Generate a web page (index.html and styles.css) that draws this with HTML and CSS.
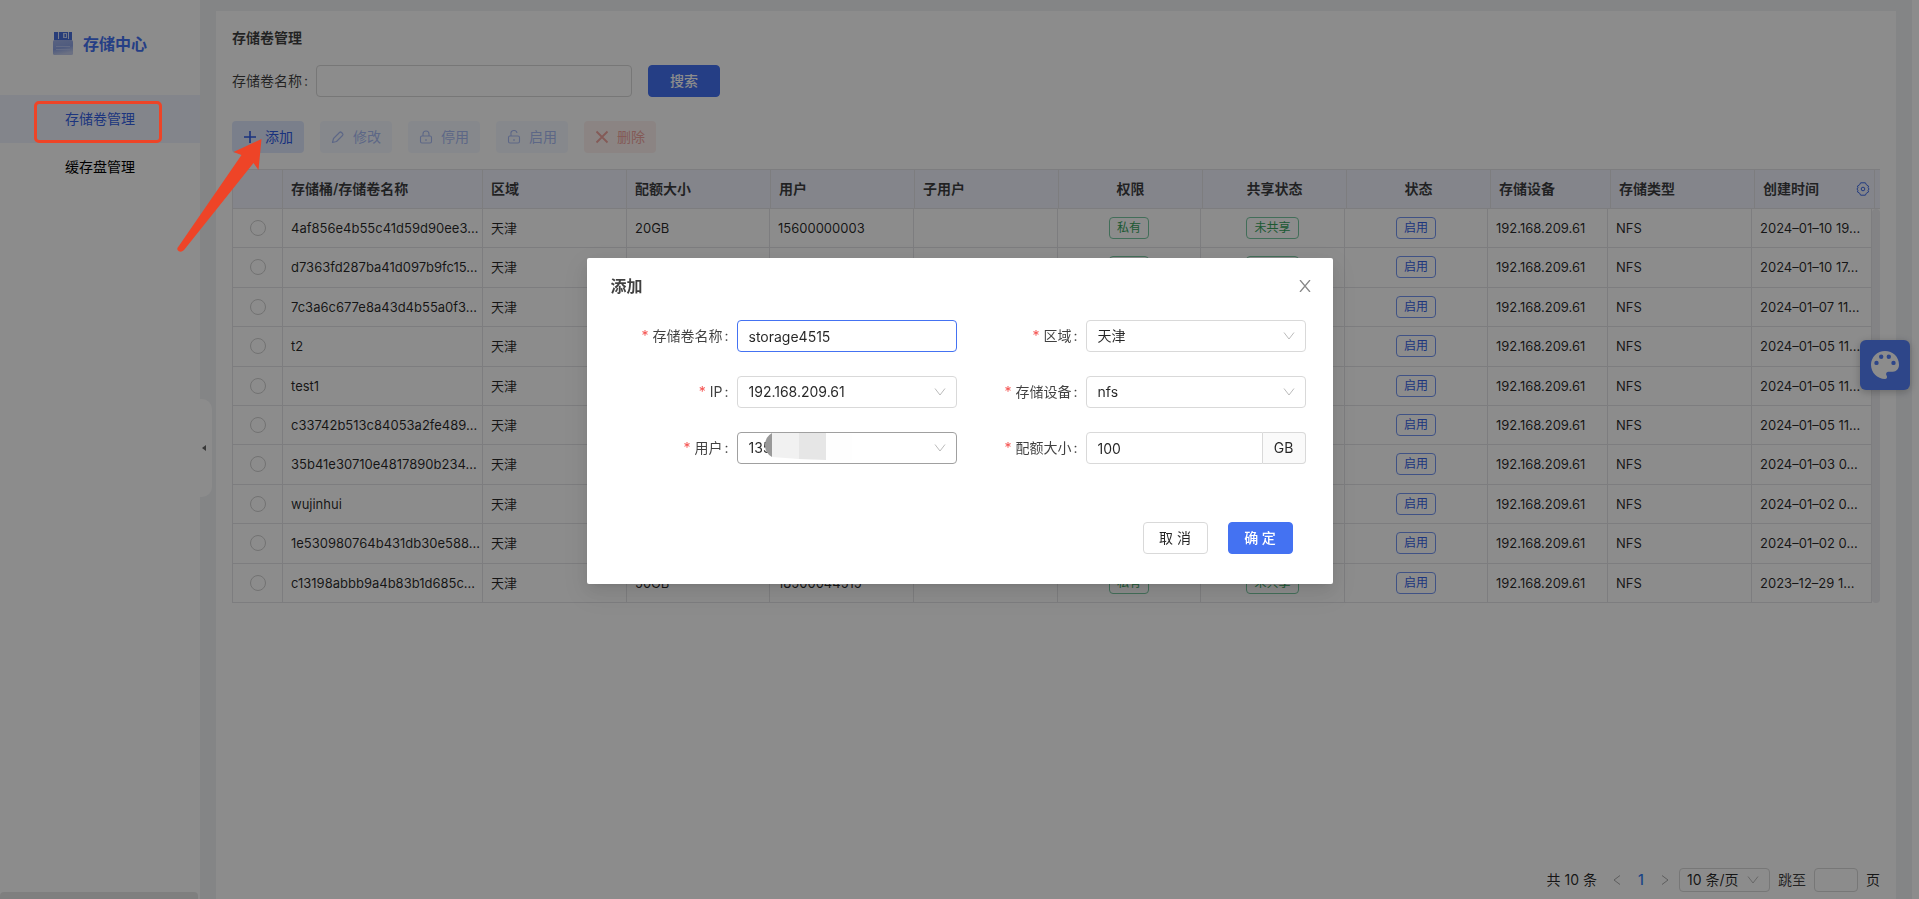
FILE: index.html
```html
<!DOCTYPE html>
<html lang="zh-CN">
<head>
<meta charset="utf-8">
<title>存储中心</title>
<link rel="stylesheet" href="styles.css">
</head>
<body>
<div class="app">
  <aside class="sidebar">
    <div class="brand">
      <svg class="brand-icon" width="20" height="24" viewBox="0 0 20 24" aria-hidden="true">
        <defs><linearGradient id="disk" x1="0" y1="0" x2="0.300" y2="1"><stop offset="0" stop-color="#a3b4ea"/><stop offset="0.600" stop-color="#8fa5e6"/><stop offset="1" stop-color="#c3cdee"/></linearGradient></defs>
        <path d="M1 1h18v8H1z" fill="#4a6fdc"/>
        <path d="M5 1h1v7H5zM15 1h1v7h-1z" fill="#dfe6fb"/>
        <path d="M10 2h4v5h-4z" fill="#c9d5f8"/><path d="M11.500 3h1.500v3h-1.500z" fill="#4a6fdc"/>
        <rect y="9" width="20" height="15" rx="1.500" fill="url(#disk)"/>
        <path d="M3 15.500h14M3 18.500h14" stroke="#b4c3f2"/>
      </svg>
      <span>存储中心</span>
    </div>
    <nav class="menu">
      <a class="menu-item active" href="#volumes">存储卷管理</a>
      <a class="menu-item" href="#cache">缓存盘管理</a>
    </nav>
    <div class="side-scroll"></div>
    <button class="collapse" aria-label="收起"><svg width="4" height="6" viewBox="0 0 4 6"><path d="M4 0v6L0 3z" fill="#666"/></svg></button>
  </aside>
  <main class="card">
    <h1 class="title">存储卷管理</h1>
    <form class="search">
      <label for="q">存储卷名称<span class="colon">:</span></label>
      <input id="q" class="box search-input" type="text">
      <button class="btn primary search-btn" type="button">搜索</button>
    </form>
    <div class="toolbar">
      <button class="tool"><svg width="14" height="14" viewBox="0 0 14 14"><path d="M7 1v12M1 7h12" stroke="currentColor" stroke-width="1.600"/></svg>添加</button>
      <button class="tool" disabled><svg width="14" height="14" viewBox="0 0 14 14" fill="none" stroke="currentColor" stroke-width="1.200" stroke-linejoin="round"><path d="M1.500 12.500 2.500 8.500 8.500 2.500Q9.500 1.500 10.500 2.500L11.500 3.500Q12.500 4.500 11.500 5.500L5.500 11.500Z"/></svg>修改</button>
      <button class="tool" disabled><svg width="14" height="14" viewBox="0 0 14 14" fill="none" stroke="currentColor" stroke-width="1.100"><rect x="1.500" y="6" width="11" height="7" rx="1.500"/><path d="M4 6V4a3 3 0 0 1 6 0v2M7 9v2"/></svg>停用</button>
      <button class="tool" disabled><svg width="14" height="14" viewBox="0 0 14 14" fill="none" stroke="currentColor" stroke-width="1.100"><rect x="1.500" y="6" width="11" height="7" rx="1.500"/><path d="M4 6V4a3 3 0 0 1 6-1M7 9v2"/></svg>启用</button>
      <button class="tool danger" disabled><svg width="14" height="14" viewBox="0 0 14 14"><path d="M1.500 1.500l11 11M12.500 1.500l-11 11" stroke="currentColor" stroke-width="1.800"/></svg>删除</button>
    </div>
    <div class="table-wrap">
      <table class="grid head">
        <colgroup><col style="width:51px"><col style="width:200px"><col style="width:144px"><col style="width:144px"><col style="width:144px"><col style="width:144px"><col style="width:144px"><col style="width:144px"><col style="width:144px"><col style="width:120px"><col style="width:144px"><col style="width:120px"><col style="width:5px"></colgroup>
        <thead><tr><th></th><th>存储桶/存储卷名称</th><th>区域</th><th>配额大小</th><th>用户</th><th>子用户</th><th class="c">权限</th><th class="c">共享状态</th><th class="c">状态</th><th>存储设备</th><th>存储类型</th><th class="last"><div class="th-flex">创建时间<svg width="14" height="14" viewBox="0 0 14 14" fill="none" stroke="#3f6be8"><path d="M4.600.8h4.800l1 2 2.100 1.200-.4 1.600.9 1.400-.9 1.400.4 1.600-2.100 1.200-1 2H4.600l-1-2L1.500 10l.4-1.600L1 7l.9-1.400L1.500 4l2.100-1.200z"/><circle cx="7" cy="7" r="1.800"/></svg></div></th><th></th></tr></thead>
      </table>
      <div class="body-row">
        <table class="grid body">
          <colgroup><col style="width:51px"><col style="width:200px"><col style="width:144px"><col style="width:143px"><col style="width:144px"><col style="width:144px"><col style="width:143px"><col style="width:144px"><col style="width:143px"><col style="width:120px"><col style="width:144px"><col style="width:120px"></colgroup>
          <tbody id="rows"></tbody>
        </table>
        <div class="track"></div>
      </div>
    </div>
    <div class="pager">
      <span>共 10 条</span>
      <span class="pages">
        <button class="pg" aria-label="上一页"><svg width="8" height="10" viewBox="0 0 8 10" fill="none" stroke="#aaa"><path d="M7 .5 1 5l6 4.500"/></svg></button>
        <button class="pg current">1</button>
        <button class="pg" aria-label="下一页"><svg width="8" height="10" viewBox="0 0 8 10" fill="none" stroke="#aaa"><path d="M1 .5 7 5 1 9.500"/></svg></button>
      </span>
      <span class="pick pick-page"><select class="box" aria-label="每页条数"><option>10 条/页</option></select><svg class="chev" width="12" height="8" viewBox="0 0 12 8" fill="none" stroke="#bbb"><path d="M1 .5 6 7l5-6.500"/></svg></span>
      <label for="jump">跳至</label><input id="jump" class="box jump" type="text"><span>页</span>
    </div>
  </main>
  <button class="palette" aria-label="主题"><svg width="28" height="28" viewBox="0 0 28 28"><path fill="#fff" fill-rule="evenodd" d="M14 0C6.300 0 0 6.100 0 13.800 0 21.500 6.300 28 14 28c1.600 0 2.200-1.200 2-2.400-.5-1.600-1.300-2.300-.7-3.600.4-1 1.500-1.300 3-1.300h3.500c3.500 0 6.200-3 6.200-7C28 5.600 21.700 0 14 0ZM5.500 9.700a2.200 2.200 0 1 1 0 4.400 2.200 2.200 0 0 1 0-4.400ZM10.200 3.600a2.200 2.200 0 1 1 0 4.400 2.200 2.200 0 0 1 0-4.400ZM17.800 3.600a2.200 2.200 0 1 1 0 4.400 2.200 2.200 0 0 1 0-4.400ZM22.500 9.700a2.200 2.200 0 1 1 0 4.400 2.200 2.200 0 0 1 0-4.400Z"/></svg></button>
</div>

<div class="mask">
  <section class="modal" role="dialog" aria-labelledby="dlg">
    <header class="modal-head"><h2 id="dlg">添加</h2><button class="close" aria-label="关闭"><svg width="12" height="12" viewBox="0 0 12 12" stroke="#888" stroke-width="1.300"><path d="M1 0l10 12M11 0 1 12"/></svg></button></header>
    <form class="fields">
      <div class="field"><label for="f1">存储卷名称<span class="colon">:</span></label><input id="f1" class="box focus" type="text" value="storage4515"></div>
      <div class="field"><label for="f2">区域<span class="colon">:</span></label><span class="pick"><select id="f2" class="box"><option>天津</option></select><svg class="chev" width="12" height="8" viewBox="0 0 12 8" fill="none" stroke="#bbb"><path d="M1 .5 6 7l5-6.500"/></svg></span></div>
      <div class="field"><label for="f3">IP<span class="colon">:</span></label><span class="pick"><select id="f3" class="box"><option>192.168.209.61</option></select><svg class="chev" width="12" height="8" viewBox="0 0 12 8" fill="none" stroke="#bbb"><path d="M1 .5 6 7l5-6.500"/></svg></span></div>
      <div class="field"><label for="f4">存储设备<span class="colon">:</span></label><span class="pick"><select id="f4" class="box"><option>nfs</option></select><svg class="chev" width="12" height="8" viewBox="0 0 12 8" fill="none" stroke="#bbb"><path d="M1 .5 6 7l5-6.500"/></svg></span></div>
      <div class="field"><label for="f5">用户<span class="colon">:</span></label><span class="pick"><select id="f5" class="box hover"><option>135</option></select><svg class="redact" width="88" height="27" viewBox="0 0 88 27" aria-hidden="true"><path d="M7 0v24Q0 20 0 12T7 0Z" fill="#999"/><path d="M7 0h27v26L7 24z" fill="#f1f1f1"/><path d="M34 0h27v27l-27-1z" fill="#e6e6e6"/><path d="M61 1h26v26H61z" fill="#fefefe"/></svg><svg class="chev" width="12" height="8" viewBox="0 0 12 8" fill="none" stroke="#bbb"><path d="M1 .5 6 7l5-6.500"/></svg></span></div>
      <div class="field"><label for="f6">配额大小<span class="colon">:</span></label><span class="group"><input id="f6" class="box" type="text" value="100"><span class="addon">GB</span></span></div>
    </form>
    <footer class="modal-foot"><button class="btn">取 消</button><button class="btn primary">确 定</button></footer>
  </section>
</div>

<div class="note-box"></div>
<svg class="note-arrow" width="86" height="114" viewBox="0 0 86 114" aria-hidden="true"><path fill="#ee4427" d="M1.500 108.500 64.500 17 56.500 14 84.500 1 81.500 32 76.500 25 7 112Q4 115 1.500 113T1.500 108.500Z"/></svg>
<script src="rows.js"></script>
</body>
</html>
```
FILE: styles.css
```css
* { box-sizing: border-box; }
body {
  margin: 0;
  background: #fff;
  color: rgba(0, 0, 0, .85);
  font: 14px/22px Inter, "Noto Sans CJK SC", sans-serif;
}
button, input, select { font: inherit; color: inherit; }
button { padding: 0; border: 0; background: none; }
h1, h2 { margin: 0; }
h1, h2, th, label { color: rgba(0, 0, 0, .75); }

.app {
  display: flex;
  gap: 16px;
  min-height: 100vh;
  margin-right: 7px;
  padding-right: 16px;
  background: #f0f2f5;
}
.sidebar {
  position: relative;
  display: flex;
  flex-direction: column;
  flex: 0 0 200px;
  background: #fff;
}
.brand {
  display: flex;
  align-items: center;
  justify-content: center;
  gap: 10px;
  height: 95px;
  padding-bottom: 8px;
  color: #4472f2;
  font-size: 16px;
  font-weight: 600;
}
.brand-icon { margin-bottom: 2px; }
.menu { flex: 1; }
.menu-item {
  display: block;
  color: #000;
  line-height: 48px;
  text-align: center;
  text-decoration: none;
}
.menu-item.active { background: #eff3fe; color: #3562e6; }
.side-scroll { height: 7px; margin-right: 2px; border-radius: 4px 4px 0 0; background: #e8e8e8; }
.collapse {
  position: absolute;
  top: 399px;
  left: 100%;
  display: flex;
  align-items: center;
  width: 12px;
  height: 98px;
  padding-left: 2px;
  border-radius: 0 10px 10px 0;
  background: #fff;
}

.card {
  display: flex;
  flex: 1;
  flex-direction: column;
  min-width: 0;
  margin-top: 11px;
  padding: 16px 16px 7px;
  background: #fff;
}
.title { font-size: 14px; font-weight: 600; line-height: 22px; }
.colon { margin: 0 8px 0 2px; }
.search { display: flex; align-items: center; margin-top: 16px; }
.box {
  width: 100%;
  height: 32px;
  padding: 0 11px;
  border: 1px solid #d9d9d9;
  border-radius: 4px;
  background: #fff;
  outline: 0;
}
.search-input { width: 316px; }
.btn {
  height: 32px;
  padding: 0 15px;
  border: 1px solid #d9d9d9;
  border-radius: 4px;
  background: #fff;
}
.btn.primary { border-color: #4472f2; background: #4472f2; color: #fff; font-weight: 500; }
.search-btn { width: 72px; margin-left: 16px; }
.toolbar { display: flex; gap: 16px; margin: 24px 0 16px; }
.tool {
  display: flex;
  align-items: center;
  justify-content: center;
  gap: 8px;
  width: 72px;
  height: 32px;
  border-radius: 4px;
  background: #dfe8fd;
  color: #2f5be6;
}
.tool:disabled { background: #f5f8ff; color: #a9bcf5; }
.tool.danger:disabled { background: #fdf1ef; color: #f0a49e; }

.grid { width: 100%; border-collapse: separate; border-spacing: 0; table-layout: fixed; }
.grid th, .grid td {
  overflow: hidden;
  padding: 0 8px;
  border-right: 1px solid #e4e4e7;
  border-bottom: 1px solid #e4e4e7;
  text-align: left;
  white-space: nowrap;
}
.grid th { height: 40px; border-top: 1px solid #e4e4e7; background: #f0f3fe; font-weight: 600; }
.grid th.last { padding-right: 4px; }
.grid th:last-child { padding: 0; border-right: 0; }
.grid tr > :first-child { border-left: 1px solid #e4e4e7; }
.grid td { height: 39px; padding-bottom: 1px; font-size: 13px; }
.grid tr:nth-child(5n+2) td, .grid tr:nth-child(5n+4) td { height: 40px; }
.grid .c { text-align: center; }
.th-flex { display: flex; align-items: center; justify-content: space-between; }
.body-row { display: flex; }
.body { flex: 1; min-width: 0; }
.track { flex: 0 0 8px; border-radius: 4px; background: #eeeef2; }
.radio {
  display: block;
  width: 16px;
  height: 16px;
  margin: 0 auto;
  border: 1px solid #d0d0d0;
  border-radius: 50%;
  background: #fff;
  appearance: none;
}
.tag {
  display: inline-block;
  padding: 0 7px;
  border: 1px solid;
  border-radius: 4px;
  font-size: 12px;
  line-height: 20px;
  vertical-align: top;
}
.tag.green { border-color: #79c9a2; color: #35a35c; }
.tag.blue { border-color: #7596f3; color: #3562e6; }

.pager { display: flex; align-items: center; justify-content: flex-end; gap: 8px; margin-top: auto; }
.pages { display: flex; gap: 12px; margin-left: 6px; }
.pg { display: flex; align-items: center; justify-content: center; width: 12px; height: 24px; }
.current { color: #2f7cf6; font-weight: 500; }
.pick { position: relative; display: block; }
.pick select { appearance: none; }
.chev { position: absolute; top: 50%; right: 11px; transform: translateY(-50%); }
.pick-page { width: 91px; }
.pick-page .box, .jump { height: 24px; padding: 0 7px; }
.jump { width: 44px; }

.palette {
  position: fixed;
  top: 340px;
  right: 9px;
  display: grid;
  place-items: center;
  width: 50px;
  height: 50px;
  border-radius: 6px;
  background: #5580fa;
  box-shadow: 0 2px 8px rgba(0, 0, 0, .25);
}

.mask { position: fixed; inset: 0; background: rgba(0, 0, 0, .45); }
.modal {
  width: 746px;
  margin: 258px auto 0;
  padding: 16px 24px 30px;
  border-radius: 2px;
  background: #fff;
  box-shadow: 0 3px 6px -4px rgba(0, 0, 0, .12), 0 6px 16px rgba(0, 0, 0, .08), 0 9px 28px 8px rgba(0, 0, 0, .05);
}
.modal-head { display: flex; align-items: center; justify-content: space-between; height: 24px; }
.modal-head h2 { font-size: 16px; font-weight: 600; }
.close { display: grid; place-items: center; width: 12px; height: 24px; margin-right: -2px; }
.fields { display: grid; grid-template-columns: 1fr 1fr; gap: 24px 0; margin-top: 22px; }
.field { display: grid; grid-template-columns: 126px 220px; align-items: center; }
.field label { text-align: right; }
.field label::before { content: "*"; margin-right: 4px; color: #f5504e; }
.focus { border-color: #4472f2; }
.hover { border-color: #a0a0a0; }
.redact { position: absolute; top: 1px; left: 28px; }
.group { display: flex; }
.group .box { flex: 1; min-width: 0; border-radius: 4px 0 0 4px; }
.addon {
  flex: 0 0 43px;
  border: 1px solid #d9d9d9;
  border-left: 0;
  border-radius: 0 4px 4px 0;
  background: #fafafa;
  line-height: 30px;
  text-align: center;
}
.modal-foot { display: flex; justify-content: flex-end; gap: 20px; margin-top: 58px; padding-right: 16px; }
.modal-foot .btn { width: 65px; }

.note-box {
  position: absolute;
  top: 101px;
  left: 34px;
  width: 128px;
  height: 42px;
  border: 3px solid #ee4427;
  border-radius: 5px;
}
.note-arrow { position: absolute; top: 138px; left: 177px; }
```
FILE: rows.js
```js
const rows = [
  ["4af856e4b55c41d59d90ee3...", "20GB", "15600000003", "2024-01-10 19..."],
  ["d7363fd287ba41d097b9fc15...", "20GB", "15600000003", "2024-01-10 17..."],
  ["7c3a6c677e8a43d4b55a0f3...", "20GB", "15600000003", "2024-01-07 11..."],
  ["t2", "20GB", "15600000003", "2024-01-05 11..."],
  ["test1", "20GB", "15600000003", "2024-01-05 11..."],
  ["c33742b513c84053a2fe489...", "20GB", "15600000003", "2024-01-05 11..."],
  ["35b41e30710e4817890b234...", "20GB", "15600000003", "2024-01-03 0..."],
  ["wujinhui", "20GB", "15600000003", "2024-01-02 0..."],
  ["1e530980764b431db30e588...", "20GB", "15600000003", "2024-01-02 0..."],
  ["c13198abbb9a4b83b1d685c...", "50GB", "18500044515", "2023-12-29 1..."]
];
document.getElementById("rows").innerHTML = rows.map(([name, size, user, time]) => `
  <tr><td><input class="radio" type="radio" name="volume" aria-label="${name}"></td>
  <td>${name}</td><td>天津</td><td>${size}</td><td>${user}</td><td></td>
  <td class="c"><span class="tag green">私有</span></td>
  <td class="c"><span class="tag green">未共享</span></td>
  <td class="c"><span class="tag blue">启用</span></td>
  <td>192.168.209.61</td><td>NFS</td><td>${time.replace(/-/g, "–")}</td></tr>`).join("");
```
